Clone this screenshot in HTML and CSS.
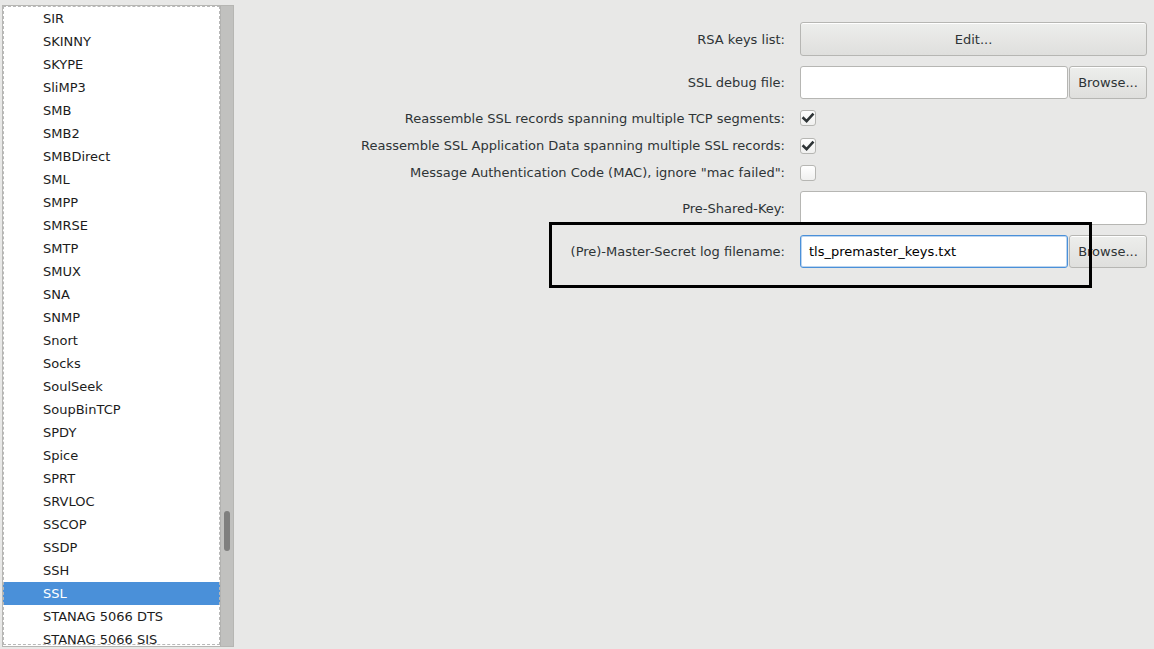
FILE: index.html
```html
<!DOCTYPE html>
<html>
<head>
<meta charset="utf-8">
<link rel="stylesheet" href="styles.css">
</head>
<body>
<div class="app">
  <div class="listpanel">
    <ul class="list">
      <li>SIR</li>
      <li>SKINNY</li>
      <li>SKYPE</li>
      <li>SliMP3</li>
      <li>SMB</li>
      <li>SMB2</li>
      <li>SMBDirect</li>
      <li>SML</li>
      <li>SMPP</li>
      <li>SMRSE</li>
      <li>SMTP</li>
      <li>SMUX</li>
      <li>SNA</li>
      <li>SNMP</li>
      <li>Snort</li>
      <li>Socks</li>
      <li>SoulSeek</li>
      <li>SoupBinTCP</li>
      <li>SPDY</li>
      <li>Spice</li>
      <li>SPRT</li>
      <li>SRVLOC</li>
      <li>SSCOP</li>
      <li>SSDP</li>
      <li>SSH</li>
      <li class="selected">SSL</li>
      <li>STANAG 5066 DTS</li>
      <li>STANAG 5066 SIS</li>
    </ul>
    <div class="scrollbar"><div class="thumb"></div></div>
  </div>
  <div class="prefs">
    <div class="grid">
      <div class="label r1">RSA keys list:</div>
      <button class="btn wide r1">Edit...</button>

      <div class="label r2">SSL debug file:</div>
      <div class="entry r2"></div>
      <button class="btn r2">Browse...</button>

      <div class="label r3">Reassemble SSL records spanning multiple TCP segments:</div>
      <div class="check-cell r3"><span class="check on"><svg viewBox="0 0 16 16" width="16" height="16"><path d="M3.5 8.2 L6.6 11.2 L12.6 4.6" fill="none" stroke="#2e3436" stroke-width="2.6" stroke-linecap="square"/></svg></span></div>

      <div class="label r4">Reassemble SSL Application Data spanning multiple SSL records:</div>
      <div class="check-cell r4"><span class="check on"><svg viewBox="0 0 16 16" width="16" height="16"><path d="M3.5 8.2 L6.6 11.2 L12.6 4.6" fill="none" stroke="#2e3436" stroke-width="2.6" stroke-linecap="square"/></svg></span></div>

      <div class="label r5">Message Authentication Code (MAC), ignore "mac failed":</div>
      <div class="check-cell r5"><span class="check"></span></div>

      <div class="label r6">Pre-Shared-Key:</div>
      <div class="entry wide r6"></div>

      <div class="label r7">(Pre)-Master-Secret log filename:</div>
      <div class="entry focus r7">tls_premaster_keys.txt</div>
      <button class="btn r7">Browse...</button>
    </div>
  </div>
  <div class="annotation"></div>
</div>
</body>
</html>
```

FILE: styles.css
```css
html, body {
  margin: 0;
  padding: 0;
  background: #e8e8e7;
  font-family: "DejaVu Sans", "Liberation Sans", sans-serif;
  font-size: 13px;
  color: #2e3436;
}

.app {
  position: relative;
  width: 1154px;
  height: 649px;
  display: flex;
  overflow: hidden;
}

.listpanel {
  margin: 5px 0 0 2px;
  width: 230px;
  height: 640px;
  border: 1px solid #b6b6b3;
  display: flex;
  background: #ffffff;
}

.list {
  list-style: none;
  margin: 0;
  padding: 1px 0 0 0;
  width: 217px;
  height: 639px;
  overflow: hidden;
  background: #ffffff;
  outline: 1px dashed #b8b8b8;
  outline-offset: -1px;
  box-sizing: border-box;
  color: #1c1c1c;
}

.list li {
  height: 23px;
  line-height: 23px;
  padding-left: 40px;
  white-space: nowrap;
}

.list li.selected {
  background: #4a90d9;
  color: #ffffff;
}

.scrollbar {
  width: 13px;
  background: #c1c1bf;
  border-left: 1px solid #b3b3b1;
  position: relative;
  box-sizing: border-box;
}

.thumb {
  position: absolute;
  left: 3px;
  top: 505px;
  width: 6px;
  height: 40px;
  border-radius: 3px;
  background: #7f7f7e;
}

.prefs {
  flex: 1;
  padding: 22px 7px 0 0;
}

.grid {
  display: grid;
  grid-template-columns: 1fr 269px 78px;
  grid-template-rows: 34px 33px 18px 17px 17px 34px 33px;
  column-gap: 0;
  row-gap: 10px;
}

.label {
  grid-column: 1;
  text-align: right;
  padding-right: 15px;
  display: flex;
  align-items: center;
  justify-content: flex-end;
  white-space: nowrap;
}

.r1 { grid-row: 1; }
.r2 { grid-row: 2; }
.r3 { grid-row: 3; }
.r4 { grid-row: 4; }
.r5 { grid-row: 5; }
.r6 { grid-row: 6; }
.r7 { grid-row: 7; }

.btn {
  grid-column: 3;
  font-family: inherit;
  font-size: 13px;
  color: #2e3436;
  background: linear-gradient(#edeeec, #dfdfdd);
  border: 1px solid #b6b6b3;
  border-radius: 3px;
  margin: 0;
  padding: 0;
  box-shadow: inset 0 1px #ffffff;
}

.btn.wide {
  grid-column: 2 / 4;
}

.entry {
  grid-column: 2;
  background: #ffffff;
  border: 1px solid #b6b6b3;
  border-radius: 3px;
  box-sizing: border-box;
  margin-right: 1px;
  padding-left: 8px;
  display: flex;
  align-items: center;
  font-size: 13px;
  color: #000000;
}

.entry.wide {
  grid-column: 2 / 4;
  margin-right: 0;
}

.entry.focus {
  border-color: #4a90d9;
  box-shadow: inset 0 0 0 1px #bcd5ef;
}

.check-cell {
  grid-column: 2;
  display: flex;
  align-items: center;
}

.check {
  width: 16px;
  height: 16px;
  box-sizing: border-box;
  border: 1px solid #b6b6b3;
  border-radius: 3px;
  background: linear-gradient(#ffffff, #f0f0ef);
  display: flex;
  align-items: center;
  justify-content: center;
}

.check svg {
  display: block;
  flex: none;
}

.annotation {
  position: absolute;
  left: 549px;
  top: 222px;
  width: 543px;
  height: 66px;
  border: 3px solid #000000;
  box-sizing: border-box;
}
```
